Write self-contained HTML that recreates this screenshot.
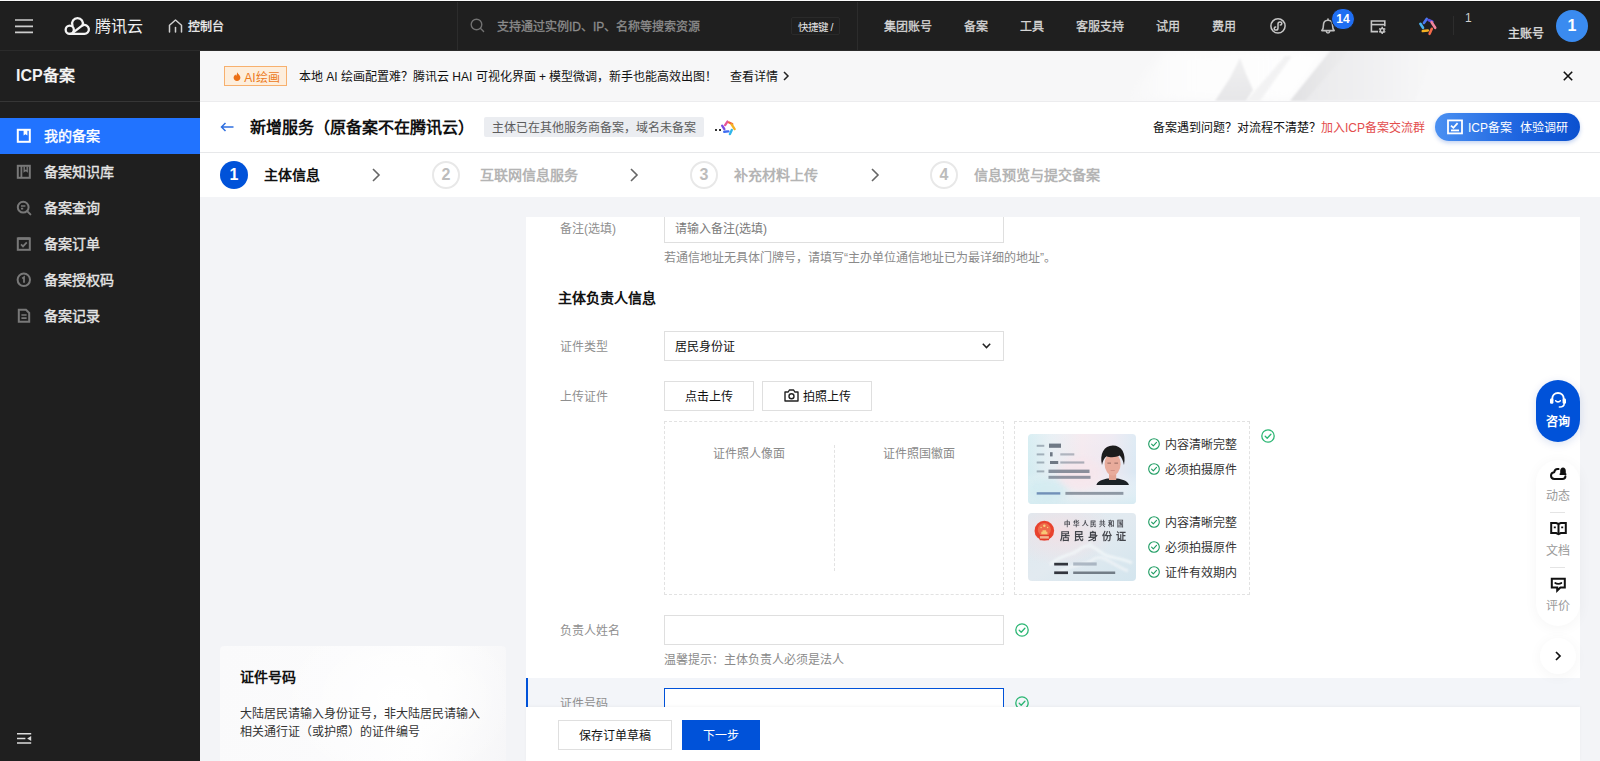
<!DOCTYPE html>
<html lang="zh-CN">
<head>
<meta charset="utf-8">
<title>ICP备案</title>
<style>
*{box-sizing:border-box;margin:0;padding:0}
html,body{width:1600px;height:761px;overflow:hidden;background:#f3f4f7}
body{font-family:"Liberation Sans",sans-serif;font-size:12px;color:#000;position:relative}
.abs{position:absolute}
.t{position:absolute;white-space:nowrap;line-height:1}
/* top bar */
#topbar{left:0;top:0;width:1600px;height:50px;background:#1f1f1f}
#sidebar{left:0;top:50px;width:200px;height:711px;background:#1f1f1f}
#banner{left:200px;top:50px;width:1400px;height:51px;background:#f7f7f8;overflow:hidden;box-shadow:inset 0 -1px 0 #ededef}
#header{left:200px;top:101px;width:1400px;height:51px;background:#fff}
#steps{left:200px;top:152px;width:1400px;height:45px;background:#fff;border-top:1px solid #e7e8ea}
#card{left:526px;top:217px;width:1054px;height:490px;background:#fff;overflow:hidden}
#footer{left:526px;top:707px;width:1054px;height:54px;background:#fff;box-shadow:0 -1px 3px rgba(0,0,0,.04)}
#help{left:220px;top:646px;width:286px;height:115px;border-radius:4px 4px 0 0;overflow:hidden;background:radial-gradient(ellipse 120px 90px at 62% 45%,#ffffff 0%,rgba(255,255,255,0) 100%),linear-gradient(100deg,#fafafb 0%,#fbfbfc 45%,#fdfdfd 70%,#f6f6f8 100%)}

/* generic text helpers */
.c{position:absolute;display:flex;align-items:center;white-space:nowrap}
.f12{font-size:12px}.f14{font-size:14px}.f16{font-size:16px}
.b{font-weight:bold}
svg{position:absolute;overflow:visible}
/* topbar */
#topbar .nav{color:#d6d6d6;font-size:12px;height:50px;top:0;-webkit-text-stroke:.3px currentColor}
#topbar .vline{position:absolute;top:0;width:1px;height:50px;background:#2c2c2c}
/* sidebar */
#sidebar .item{position:absolute;left:0;width:200px;height:36px;color:#e4e4e4;font-size:14px;-webkit-text-stroke:.4px currentColor}
#sidebar .item span{position:absolute;left:44px;top:0;line-height:36px;white-space:nowrap}
#sidebar .item.on{background:#2173ff;color:#fff}
#sidebar .item svg{left:16px;top:10px}

/* steps */
.stepc{position:absolute;top:7.5px;width:28px;height:28px;border-radius:14px;display:flex;align-items:center;justify-content:center;font-size:16px;font-weight:bold}
.stepc.off{border:2px solid #e8e8e8;color:#bcbcbc;background:#fff}
.stept{position:absolute;top:-1px;height:44px;display:flex;align-items:center;font-size:14px;font-weight:bold;white-space:nowrap}
.stept.off{color:#b4b4b4}

/* form */
#card .lab{position:absolute;left:34px;padding-bottom:2px;color:#8f8f8f;font-size:12px;height:30px;display:flex;align-items:center;white-space:nowrap}
#card .inp{position:absolute;left:138px;width:340px;height:30px;padding-bottom:2px;border:1px solid #dfdfdf;background:#fff;font-size:12px;display:flex;align-items:center;padding-left:10px;white-space:nowrap}
#card .hint{position:absolute;left:138px;margin-top:-1px;color:#8a8a8a;font-size:12px;height:18px;display:flex;align-items:center;white-space:nowrap}
.btn{position:absolute;height:30px;padding-bottom:2px;border:1px solid #dfdfdf;background:#fff;color:#111;font-size:12px;display:flex;align-items:center;justify-content:center;white-space:nowrap}
.ok{position:absolute}
.req{position:absolute;left:151px;margin-top:-1px;font-size:12px;color:#333;height:14px;display:flex;align-items:center;white-space:nowrap}
</style>
</head>
<body>
<div id="topbar" class="abs">
  <!-- hamburger -->
  <svg style="left:15px;top:18px" width="18" height="16" viewBox="0 0 18 16" stroke="#cdcdcd" stroke-width="1.7"><path d="M0 2 H18 M0 8.3 H18 M0 14.4 H18"/></svg>
  <!-- cloud logo -->
  <svg style="left:64px;top:16px" width="26" height="20" viewBox="0 0 26 20" fill="none" stroke="#f4f4f4" stroke-width="2.3" stroke-linecap="round" stroke-linejoin="round">
    <circle cx="5.75" cy="13.75" r="4.1"/>
    <path d="M8.45 9.4 A5.4 5.4 0 1 1 18.55 9.4 A4.45 4.45 0 1 1 19.9 17.85 H5.75"/>
    <path d="M18.4 9.3 L9 16.6"/>
  </svg>
  <div class="c" style="left:95px;top:-1px;height:52px;font-size:16px;color:#f0f0f0">腾讯云</div>
  <!-- home -->
  <svg style="left:168px;top:19px" width="15" height="14" viewBox="0 0 15 14" fill="none" stroke="#d0d0d0" stroke-width="1.5" stroke-linejoin="round" stroke-linecap="round">
    <path d="M1.5 13 V6.2 L7.5 1 L13.5 6.2 V13"/><path d="M7.5 13 V8.5"/>
  </svg>
  <div class="c nav" style="left:188px;color:#f2f2f2">控制台</div>
  <div class="vline" style="left:457px"></div>
  <!-- search -->
  <svg style="left:470px;top:18px" width="15" height="15" viewBox="0 0 15 15" fill="none" stroke="#727272" stroke-width="1.4" stroke-linecap="round">
    <circle cx="6.5" cy="6.5" r="5.3"/><path d="M10.6 10.6 L13.6 13.6"/>
  </svg>
  <div class="c nav" style="left:497px;color:#8c8c8c">支持通过实例ID、IP、名称等搜索资源</div>
  <div class="c" style="left:791px;top:17px;width:49px;height:18px;border:1px solid #2a2a2a;border-radius:2px;color:#e6e6e6;font-size:10.5px;justify-content:center">快捷键 /</div>
  <div class="vline" style="left:857px"></div>
  <div class="c nav" style="left:884px">集团账号</div>
  <div class="c nav" style="left:964px">备案</div>
  <div class="c nav" style="left:1020px">工具</div>
  <div class="c nav" style="left:1076px">客服支持</div>
  <div class="c nav" style="left:1156px">试用</div>
  <div class="c nav" style="left:1212px">费用</div>
  <!-- mini program -->
  <svg style="left:1270px;top:18px" width="16" height="16" viewBox="0 0 16 16" fill="none" stroke="#c6c6c6" stroke-width="1.5" stroke-linecap="round">
    <circle cx="8" cy="7.9" r="7.1"/>
    <path d="M8 10 V6 C8 4.6 9 3.9 10 3.9 C11.1 3.9 11.8 4.7 11.8 5.6 C11.8 6.5 11.1 7.1 10.3 7.1 M8 10 C8 11.4 7 12.1 6 12.1 C4.9 12.1 4.2 11.3 4.2 10.4 C4.2 9.5 4.9 8.9 5.7 8.9"/>
  </svg>
  <!-- bell -->
  <svg style="left:1320px;top:18px" width="16" height="17" viewBox="0 0 16 17" fill="none" stroke="#bdbdbd" stroke-width="1.6" stroke-linecap="round" stroke-linejoin="round">
    <path d="M1.8 12.6 C3.2 11.4 3.4 9.8 3.4 7.4 C3.4 4.2 5.4 2.2 8 2.2 C10.6 2.2 12.6 4.2 12.6 7.4 C12.6 9.8 12.8 11.4 14.2 12.6 Z"/><path d="M6.2 13 C6.4 15.6 9.6 15.6 9.8 13" stroke-width="1.5"/><path d="M8 1 V2"/>
  </svg>
  <div class="c b" style="left:1331px;top:8px;width:24px;height:22px;border-radius:11px;border:1px solid #1f1f1f;background:#1f6ef2;color:#fff;font-size:12px;justify-content:center">14</div>
  <!-- bill/settings -->
  <svg style="left:1370px;top:20px" width="17" height="15" viewBox="0 0 17 15" fill="none" stroke="#c6c6c6" stroke-width="1.6">
    <path d="M8 11.6 H1.4 V1 H14.8 V6.2"/><path d="M1.4 4.6 H14.8"/>
    <circle cx="12.2" cy="10.4" r="1.9" stroke-width="1.5"/><path d="M12.2 6.8 V8 M12.2 12.8 V14 M9.1 8.6 L10.1 9.2 M14.3 11.6 L15.3 12.2 M9.1 12.2 L10.1 11.6 M14.3 9.2 L15.3 8.6" stroke-width="1.5"/>
  </svg>
  <!-- colourful star -->
  <svg style="left:1419px;top:17px" width="19" height="19" viewBox="0 0 19 19" fill="none" stroke-width="2.6" stroke-linecap="round">
    <path d="M4.9 6 L7.7 1.9" stroke="#4a78f0"/>
    <path d="M9.6 3 L13.4 4.7" stroke="#5b4fe0"/>
    <path d="M12.6 5.2 L16.2 10.8" stroke="#f2849c"/>
    <path d="M12.8 11.8 L10.6 16.8" stroke="#f26a4a"/>
    <path d="M3.8 14 L8.8 13.5" stroke="#f5b223"/>
    <path d="M1.4 6.8 L4 10.8" stroke="#4ab4f0"/>
  </svg>
  <div class="abs" style="left:1453px;top:16px;width:1px;height:19px;background:#2d2d2d"></div>
  <div class="c" style="left:1465px;top:11px;height:14px;font-size:12px;color:#d0d0d0">1</div>
  <div class="c" style="left:1508px;top:24.5px;height:16px;font-size:12px;color:#e0e0e0;-webkit-text-stroke:.3px currentColor">主账号</div>
  <div class="c b" style="left:1556px;top:10px;width:32px;height:32px;border-radius:16px;background:#3a8bf0;color:#fff;font-size:16px;justify-content:center">1</div>
</div>
<div id="sidebar" class="abs">
  <div class="c b" style="left:16px;top:12px;height:24px;font-size:16px;color:#f2f2f2">ICP备案</div>
  <div class="abs" style="left:0;top:51px;width:200px;height:1px;background:#363636"></div>
  <div class="item on" style="top:68px">
    <svg width="16" height="16" viewBox="0 0 16 16" fill="none" stroke="#fff" stroke-width="2"><rect x="1.8" y="1.8" width="12" height="12"/><path d="M7.6 1.8 V7.6 L9.5 6.2 L11.4 7.6 V1.8 Z" fill="#fff" stroke="none"/></svg>
    <span>我的备案</span></div>
  <div class="item" style="top:104px">
    <svg width="16" height="16" viewBox="0 0 16 16" fill="none" stroke="#787878" stroke-width="2"><rect x="1.8" y="1.8" width="12" height="12"/><path d="M5.4 1.8 V13.8" stroke-width="1.8"/><path d="M8.2 2.6 V7.4 L9.7 6.3 L11.2 7.4 V2.6" stroke-width="1.4"/></svg>
    <span>备案知识库</span></div>
  <div class="item" style="top:140px">
    <svg width="16" height="16" viewBox="0 0 16 16" fill="none" stroke="#787878" stroke-width="2" stroke-linecap="round"><circle cx="7.2" cy="7.2" r="5.4"/><path d="M11.4 11.4 L14.4 14.4"/><path d="M5 6 H9.4 M5 8.6 H7.2" stroke-width="1.6" stroke-linecap="butt"/></svg>
    <span>备案查询</span></div>
  <div class="item" style="top:176px">
    <svg width="16" height="16" viewBox="0 0 16 16" fill="none" stroke="#787878" stroke-width="2"><rect x="1.8" y="2.4" width="12" height="11.4"/><path d="M1.8 2.6 H13.8" stroke-width="2.6"/><path d="M5 8.4 L7 10.4 L10.8 6.4" stroke-width="1.8"/></svg>
    <span>备案订单</span></div>
  <div class="item" style="top:212px">
    <svg width="16" height="16" viewBox="0 0 16 16" fill="none" stroke="#787878" stroke-width="2"><circle cx="7.8" cy="7.8" r="6.2"/><path d="M6.2 6.4 L8 5.2 V10.8" stroke-width="1.8"/></svg>
    <span>备案授权码</span></div>
  <div class="item" style="top:248px">
    <svg width="16" height="16" viewBox="0 0 16 16" fill="none" stroke="#787878" stroke-width="2"><path d="M2.8 1.8 H10 L13.2 5 V13.8 H2.8 Z"/><path d="M5.4 7 H10.6 M5.4 10.2 H10.6" stroke-width="1.7"/></svg>
    <span>备案记录</span></div>
  <!-- collapse -->
  <svg style="left:17px;top:683px" width="15" height="11" viewBox="0 0 15 11" fill="none" stroke="#dcdcdc" stroke-width="1.5"><path d="M0 .8 H14.2 M0 5.5 H8.4 M0 10.1 H14.2"/><path d="M14.2 2.9 V8.1 L10.2 5.5 Z" fill="#dcdcdc" stroke="none"/></svg>
</div>
<div id="banner" class="abs">
  <!-- decorative ribbons -->
  <svg style="left:0;top:0" width="1400" height="51" viewBox="0 0 1400 51">
    <defs>
      <linearGradient id="bw" x1="0" y1="0" x2="1" y2="0"><stop offset="0" stop-color="#fdfdfd" stop-opacity="0"/><stop offset=".25" stop-color="#fdfdfd" stop-opacity=".9"/><stop offset=".85" stop-color="#fefefe" stop-opacity="1"/><stop offset="1" stop-color="#fefefe" stop-opacity=".9"/></linearGradient>
      <linearGradient id="bband" x1="0" y1="0" x2="1" y2="0"><stop offset="0" stop-color="#e1e1e3"/><stop offset="1" stop-color="#ededee"/></linearGradient>
      <linearGradient id="bfade" x1="0" y1="0" x2="1" y2="0"><stop offset="0" stop-color="#eaeaec"/><stop offset="1" stop-color="#f7f7f8"/></linearGradient>
      <linearGradient id="btri" x1="0" y1="0" x2="0" y2="1"><stop offset="0" stop-color="#f0f0f1"/><stop offset="1" stop-color="#e6e6e8"/></linearGradient>
      <filter id="bbl" x="-10%" y="-30%" width="120%" height="160%"><feGaussianBlur stdDeviation="1.2"/></filter>
      <filter id="bbl3" x="-10%" y="-30%" width="120%" height="160%"><feGaussianBlur stdDeviation="4"/></filter>
    </defs>
    <rect width="1400" height="51" fill="#f7f7f8"/>
    <path d="M925 51 L965 0 L1131 0 L1092 51 Z" fill="url(#bw)" filter="url(#bbl3)"/>
    <path d="M1105 51 L1148 0 L1235 0 L1215 51 Z" fill="url(#bfade)" filter="url(#bbl)"/>
    <path d="M1090 51 L1131 0 L1150 0 L1106 51 Z" fill="url(#bband)" filter="url(#bbl)"/>
    <path d="M1015 51 L1030 28 L1040 8 L1046 24 L1053 40 L1046 51 Z" fill="url(#btri)" filter="url(#bbl)"/>
    <path d="M1046 51 L1085 6 L1092 6 L1060 51 Z" fill="#f0f0f1" filter="url(#bbl)" opacity=".8"/>
  </svg>
  <div class="c" style="left:24px;top:16px;width:63px;height:20px;border:1px solid #f7b06e;background:#fdeedd;color:#ec7a1c;font-size:12px;justify-content:center;padding-left:2px">
    <svg style="position:static;margin-right:3px" width="8" height="9" viewBox="0 0 8 9"><path d="M4 0 C4.6 1.8 7.4 3 7.4 5.6 C7.4 7.6 5.8 9 4 9 C2.2 9 .6 7.6 .6 5.6 C.6 4.2 1.6 3.6 2.2 2.4 C2.8 3 3 3.4 3.2 3.8 C3.8 2.6 4.2 1.6 4 0 Z" fill="#ec6f14"/></svg>AI绘画</div>
  <div class="c f12" style="left:99px;top:0;height:51px;color:#111">本地 AI 绘画配置难？腾讯云 HAI 可视化界面 + 模型微调，新手也能高效出图！</div>
  <div class="c f12" style="left:530px;top:0;height:51px;color:#111">查看详情</div>
  <svg style="left:783px;top:21px;left:583px" width="6" height="10" viewBox="0 0 6 10" fill="none" stroke="#222" stroke-width="1.5"><path d="M1 1 L5 5 L1 9"/></svg>
  <svg style="left:1363px;top:21px" width="10" height="10" viewBox="0 0 10 10" fill="none" stroke="#111" stroke-width="1.6"><path d="M.8 .8 L9.2 9.2 M9.2 .8 L.8 9.2"/></svg>
</div>
<div id="header" class="abs">
  <svg style="left:20px;top:21px" width="14" height="10" viewBox="0 0 14 10" fill="none" stroke="#2f6fe0" stroke-width="1.5"><path d="M13.5 5 H1.5 M5.5 1 L1.5 5 L5.5 9"/></svg>
  <div class="c b f16" style="left:50px;top:-1px;height:51px;color:#111">新增服务（原备案不在腾讯云）</div>
  <div class="c f12" style="left:284px;top:16px;width:220px;height:20px;background:#ebedf1;border-radius:2px;color:#5c5c5c;padding-left:8px;padding-bottom:2px">主体已在其他服务商备案，域名未备案</div>
  <!-- dots + coloured star -->
  <div class="abs" style="left:515px;top:28px;width:2px;height:2px;background:#333"></div>
  <div class="abs" style="left:519px;top:28px;width:2px;height:2px;background:#333"></div>
  <svg style="left:521px;top:19px" width="16" height="16" viewBox="0 0 19 19" fill="none" stroke-width="2.8" stroke-linecap="round">
    <path d="M4.9 6 L7.7 1.9" stroke="#e8559a"/>
    <path d="M9.6 3 L13.4 4.7" stroke="#f2683c"/>
    <path d="M12.6 5.2 L16.2 10.8" stroke="#f5b223"/>
    <path d="M12.8 11.8 L10.6 16.8" stroke="#2fb6ea"/>
    <path d="M3.8 14 L8.8 13.5" stroke="#3f6df2"/>
    <path d="M1.4 6.8 L4 10.8" stroke="#7a4be0"/>
  </svg>
  <div class="c f12" style="left:953px;top:0;height:51px;color:#111">备案遇到问题？对流程不清楚？</div>
  <div class="c f12" style="left:1121px;top:0;height:51px;color:#e34d4d">加入ICP备案交流群</div>
  <div class="abs" style="left:1235px;top:12px;width:145px;height:28px;border-radius:14px;background:linear-gradient(90deg,#4a90f2 0%,#1f66e0 55%,#0b50cf 100%);box-shadow:0 2px 4px rgba(20,80,200,.25)"></div>
  <svg style="left:1247px;top:18px" width="16" height="16" viewBox="0 0 16 16" fill="none" stroke="#fff" stroke-width="1.8"><rect x="1" y="1.4" width="14" height="13"/><path d="M4 6.6 L6.4 8.8 L10.6 4.2" stroke-width="1.8"/><path d="M4 11.4 H12"/></svg>
  <div class="c f12" style="left:1268px;top:11px;height:28px;color:#fff">ICP备案</div>
  <div class="c f12" style="left:1320px;top:11px;height:28px;color:#fff">体验调研</div>
</div>
<div id="steps" class="abs">
  <div class="stepc" style="left:20px;background:#0052d9;color:#fff">1</div>
  <div class="stept" style="left:64px;color:#111">主体信息</div>
  <svg style="left:172px;top:14.5px" width="8" height="14" viewBox="0 0 8 14" fill="none" stroke="#666" stroke-width="1.6"><path d="M1 1 L7 7 L1 13"/></svg>
  <div class="stepc off" style="left:232px">2</div>
  <div class="stept off" style="left:280px">互联网信息服务</div>
  <svg style="left:430px;top:14.5px" width="8" height="14" viewBox="0 0 8 14" fill="none" stroke="#666" stroke-width="1.6"><path d="M1 1 L7 7 L1 13"/></svg>
  <div class="stepc off" style="left:490px">3</div>
  <div class="stept off" style="left:534px">补充材料上传</div>
  <svg style="left:671px;top:14.5px" width="8" height="14" viewBox="0 0 8 14" fill="none" stroke="#666" stroke-width="1.6"><path d="M1 1 L7 7 L1 13"/></svg>
  <div class="stepc off" style="left:730px">4</div>
  <div class="stept off" style="left:774px">信息预览与提交备案</div>
</div>
<div id="card" class="abs">
  <div class="lab" style="top:-4px">备注(选填)</div>
  <div class="inp" style="top:-4px;color:#7a7a7a">请输入备注(选填)</div>
  <div class="hint" style="top:31px">若通信地址无具体门牌号，请填写“主办单位通信地址已为最详细的地址”。</div>
  <div class="c b f14" style="left:32px;top:68.5px;height:22px;color:#111">主体负责人信息</div>
  <div class="lab" style="top:114px">证件类型</div>
  <div class="inp" style="top:114px;color:#111">居民身份证</div>
  <svg style="left:456px;top:126px" width="9" height="6" viewBox="0 0 9 6" fill="none" stroke="#222" stroke-width="1.5"><path d="M.8 .8 L4.5 4.6 L8.2 .8"/></svg>
  <div class="lab" style="top:164px">上传证件</div>
  <div class="btn" style="left:138px;top:164px;width:90px">点击上传</div>
  <div class="btn" style="left:236px;top:164px;width:110px">
    <svg style="position:static;margin-right:4px;margin-top:1.5px" width="15" height="13" viewBox="0 0 15 13" fill="none" stroke="#222" stroke-width="1.4" stroke-linejoin="round"><path d="M1 3 H4.2 L5.4 1 H9.6 L10.8 3 H14 V12 H1 Z"/><circle cx="7.5" cy="7.3" r="2.5"/></svg>拍照上传</div>
  <!-- upload box 1 -->
  <div class="abs" style="left:138px;top:204px;width:340px;height:174px;border:1px dashed #e2e2e2"></div>
  <div class="abs" style="left:308px;top:228px;width:0;height:126px;border-left:1px dashed #e2e2e2"></div>
  <div class="c f12" style="left:138px;top:226px;width:170px;height:18px;justify-content:center;color:#8a8a8a">证件照人像面</div>
  <div class="c f12" style="left:308px;top:226px;width:170px;height:18px;justify-content:center;color:#8a8a8a">证件照国徽面</div>
  <!-- sample box -->
  <div class="abs" style="left:488px;top:204px;width:236px;height:174px;border:1px dashed #e2e2e2"></div>
  <svg id="id1" style="left:502px;top:217px" width="108" height="70" viewBox="0 0 108 70">
    <defs>
      <linearGradient id="i1a" x1="0" y1="0" x2="1" y2="0"><stop offset="0" stop-color="#d3ecf1"/><stop offset=".22" stop-color="#e6eef3"/><stop offset=".5" stop-color="#f4e8ee"/><stop offset=".78" stop-color="#ece8f1"/><stop offset="1" stop-color="#dae8f3"/></linearGradient>
      <linearGradient id="i1b" x1="0" y1="0" x2="0" y2="1"><stop offset="0" stop-color="#ffffff" stop-opacity=".15"/><stop offset=".55" stop-color="#ffffff" stop-opacity="0"/><stop offset="1" stop-color="#d6ecf2" stop-opacity=".8"/></linearGradient>
      <filter id="bl" x="-10%" y="-10%" width="120%" height="120%"><feGaussianBlur stdDeviation=".45"/></filter>
      <filter id="bl2" x="-20%" y="-20%" width="140%" height="140%"><feGaussianBlur stdDeviation=".8"/></filter>
      <filter id="bl4" x="-30%" y="-30%" width="160%" height="160%"><feGaussianBlur stdDeviation="3"/></filter>
      <clipPath id="cp1"><rect width="108" height="70" rx="4"/></clipPath>
    </defs>
    <g clip-path="url(#cp1)">
      <rect width="108" height="70" fill="url(#i1a)"/>
      <rect width="108" height="70" fill="url(#i1b)"/>
      <ellipse cx="20" cy="56" rx="20" ry="12" fill="#cfeaf0" opacity=".7" filter="url(#bl4)"/>
      <ellipse cx="52" cy="40" rx="22" ry="16" fill="#f7e6ec" opacity=".8" filter="url(#bl4)"/>
      <g filter="url(#bl)" fill="#6f7b8b">
        <rect x="8.7" y="10.8" width="7.6" height="2" opacity=".55"/><rect x="21" y="9.6" width="12" height="4.2" fill="#5a6472" opacity=".85"/>
        <rect x="8.7" y="19.4" width="7.6" height="2" opacity=".55"/><rect x="22" y="18.2" width="2.6" height="4.2" fill="#5a6472" opacity=".85"/><rect x="32.3" y="19.3" width="14" height="2.2" opacity=".5"/>
        <rect x="8.7" y="27.5" width="7.6" height="2" opacity=".55"/><rect x="22" y="27" width="8.2" height="3" fill="#5a6472" opacity=".85"/><rect x="32.3" y="27.4" width="24" height="2.2" opacity=".55"/>
        <rect x="8.7" y="36.4" width="7.6" height="2" opacity=".55"/><rect x="20.5" y="35.6" width="41" height="3.4" fill="#667080" opacity=".75"/>
        <rect x="20.5" y="41.8" width="42" height="3" fill="#667080" opacity=".7"/>
        <rect x="8.7" y="58.2" width="23.6" height="2.4" fill="#4f72a4" opacity=".75"/><rect x="37.4" y="57.9" width="58" height="2.9" fill="#6a7482" opacity=".7"/>
      </g>
      <!-- portrait -->
      <g filter="url(#bl)">
        <path d="M68.4 51 C70 46.4 76 45.6 79.6 44.6 L89.6 44.6 C93.2 45.6 99.4 46.4 101 51 Z" fill="#1f2025"/>
        <rect x="81" y="38" width="7.2" height="8" fill="#e3a392"/>
        <ellipse cx="84.6" cy="30" rx="8" ry="11.4" fill="#e8ab9b"/>
        <path d="M74 31 C71.4 20 76 11.4 84.8 11.4 C93.6 11.4 98.4 19 96 31 C95 26.6 93.6 23.4 91.6 21.6 C87.6 23.6 81.6 23.6 78.6 22.2 C76.2 24 74.8 27 74 31 Z" fill="#1b1a1d"/>
        <rect x="79.4" y="28.6" width="3.6" height="1.1" fill="#6a4640" opacity=".6"/><rect x="86.4" y="28.6" width="3.6" height="1.1" fill="#6a4640" opacity=".6"/>
        <rect x="82.6" y="36" width="4.2" height=".9" fill="#c27a6e" opacity=".6"/>
      </g>
    </g>
  </svg>
  <svg id="id2" style="left:502px;top:296px" width="108" height="68" viewBox="0 0 108 68">
    <defs>
      <linearGradient id="i2a" x1="0" y1="0" x2="1" y2="1"><stop offset="0" stop-color="#dde9ef"/><stop offset=".5" stop-color="#e2eaf0"/><stop offset="1" stop-color="#d3e5ee"/></linearGradient>
      <radialGradient id="i2b" cx=".3" cy=".28" r=".5"><stop offset="0" stop-color="#f3e0e5" stop-opacity=".95"/><stop offset="1" stop-color="#f3e0e5" stop-opacity="0"/></radialGradient>
      <clipPath id="cp2"><rect width="108" height="68" rx="4"/></clipPath>
    </defs>
    <g clip-path="url(#cp2)">
      <rect width="108" height="68" fill="url(#i2a)"/>
      <rect width="108" height="68" fill="url(#i2b)"/>
      <!-- faint great wall -->
      <g filter="url(#bl2)" fill="none" stroke="#f1f6f8" stroke-width="3" opacity=".9">
        <path d="M22 52 C34 40 42 44 52 36 C60 30 66 34 74 40 C82 46 92 44 104 50"/>
        <path d="M30 60 C44 50 56 54 66 46 C74 40 84 52 100 58" stroke="#eef3f6"/>
        <path d="M58 34 l4 -6 l4 6 z" fill="#eef3f6" stroke="none"/>
      </g>
      <!-- emblem -->
      <g filter="url(#bl)" transform="translate(-1,0.9) scale(1.02)">
        <circle cx="17" cy="16.4" r="9.6" fill="#e8432e"/>
        <circle cx="17" cy="15.4" r="6.4" fill="#ef6a4c"/>
        <path d="M11.2 21 H22.8 L21.4 25.8 H12.6 Z" fill="#e23a28"/>
        <rect x="12.6" y="21.8" width="8.8" height="2.4" fill="#f6c9a0" opacity=".85"/>
        <path d="M14 17.6 H20 V20 H14 Z M15.2 16 H18.8 V17.6 H15.2 Z" fill="#f8d27a" opacity=".9"/>
        <circle cx="17" cy="11.6" r="1.2" fill="#f8d27a"/><circle cx="13.8" cy="13.4" r=".7" fill="#f8d27a"/><circle cx="20.2" cy="13.4" r=".7" fill="#f8d27a"/>
      </g>
      <text x="36" y="13.2" font-family="'Liberation Serif',serif" font-weight="bold" font-size="6.5" letter-spacing="1.8" fill="#45474e" filter="url(#bl)">中华人民共和国</text>
      <text x="32.4" y="26.9" font-family="'Liberation Serif',serif" font-weight="bold" font-size="10" letter-spacing="4" fill="#43454c" filter="url(#bl)">居民身份证</text>
      <g filter="url(#bl)">
        <rect x="26.2" y="49.8" width="13.8" height="2.7" fill="#30343c"/><rect x="45.2" y="49.4" width="23.5" height="3.2" fill="#9aa6b4" opacity=".75"/>
        <rect x="26.2" y="58.4" width="13.8" height="2.7" fill="#30343c"/><rect x="45.2" y="58.5" width="42" height="2.5" fill="#59616d" opacity=".8"/>
      </g>
    </g>
  </svg>
  <svg style="left:622px;top:220.9px" width="12" height="12" viewBox="0 0 14 14" fill="none" stroke="#1f9d63" stroke-width="1.3" stroke-linecap="round" stroke-linejoin="round"><circle cx="7" cy="7" r="6.2"/><path d="M4.2 7.2 L6.2 9.2 L9.9 5.2"/></svg><div class="req" style="left:639px;top:220px">内容清晰完整</div>
  <svg style="left:622px;top:245.9px" width="12" height="12" viewBox="0 0 14 14" fill="none" stroke="#1f9d63" stroke-width="1.3" stroke-linecap="round" stroke-linejoin="round"><circle cx="7" cy="7" r="6.2"/><path d="M4.2 7.2 L6.2 9.2 L9.9 5.2"/></svg><div class="req" style="left:639px;top:245px">必须拍摄原件</div>
  <svg style="left:622px;top:298.8px" width="12" height="12" viewBox="0 0 14 14" fill="none" stroke="#1f9d63" stroke-width="1.3" stroke-linecap="round" stroke-linejoin="round"><circle cx="7" cy="7" r="6.2"/><path d="M4.2 7.2 L6.2 9.2 L9.9 5.2"/></svg><div class="req" style="left:639px;top:298px">内容清晰完整</div>
  <svg style="left:622px;top:323.8px" width="12" height="12" viewBox="0 0 14 14" fill="none" stroke="#1f9d63" stroke-width="1.3" stroke-linecap="round" stroke-linejoin="round"><circle cx="7" cy="7" r="6.2"/><path d="M4.2 7.2 L6.2 9.2 L9.9 5.2"/></svg><div class="req" style="left:639px;top:323px">必须拍摄原件</div>
  <svg style="left:622px;top:348.8px" width="12" height="12" viewBox="0 0 14 14" fill="none" stroke="#1f9d63" stroke-width="1.3" stroke-linecap="round" stroke-linejoin="round"><circle cx="7" cy="7" r="6.2"/><path d="M4.2 7.2 L6.2 9.2 L9.9 5.2"/></svg><div class="req" style="left:639px;top:348px">证件有效期内</div>
  <svg style="left:735px;top:212px" width="14" height="14" viewBox="0 0 14 14" fill="none" stroke="#2bb673" stroke-width="1.3" stroke-linecap="round" stroke-linejoin="round"><circle cx="7" cy="7" r="6.2"/><path d="M4.2 7.2 L6.2 9.2 L9.9 5.2"/></svg>
  <!-- name -->
  <div class="lab" style="top:398px">负责人姓名</div>
  <div class="inp" style="top:398px"></div>
  <svg style="left:489px;top:406px" width="14" height="14" viewBox="0 0 14 14" fill="none" stroke="#2bb673" stroke-width="1.3" stroke-linecap="round" stroke-linejoin="round"><circle cx="7" cy="7" r="6.2"/><path d="M4.2 7.2 L6.2 9.2 L9.9 5.2"/></svg>
  <div class="hint" style="top:433px">温馨提示：主体负责人必须是法人</div>
  <!-- focused row -->
  <div class="abs" style="left:0;top:461px;width:1054px;height:29px;background:#f3f5f9;border-left:2px solid #0052d9"></div>
  <div class="lab" style="top:471px">证件号码</div>
  <div class="inp" style="top:471px;border-color:#0052d9"></div>
  <svg style="left:489px;top:479px" width="14" height="14" viewBox="0 0 14 14" fill="none" stroke="#2bb673" stroke-width="1.3" stroke-linecap="round" stroke-linejoin="round"><circle cx="7" cy="7" r="6.2"/><path d="M4.2 7.2 L6.2 9.2 L9.9 5.2"/></svg>
</div>
<div id="footer" class="abs">
  <div class="btn" style="left:32px;top:13px;width:114px">保存订单草稿</div>
  <div class="btn" style="left:156px;top:13px;width:78px;background:#0052d9;border-color:#0052d9;color:#fff">下一步</div>
</div>
<div class="abs" style="left:0;top:50px;width:1600px;height:1px;background:#2b2b2b"></div>
<div class="abs" style="left:0;top:0;width:1600px;height:1px;background:#fbfbfb"></div>
<div class="abs" style="left:0;top:1px;width:1600px;height:1px;background:#161616"></div>
<div class="abs" style="left:200px;top:101px;width:1400px;height:1px;background:#ececee"></div>
<div id="help" class="abs">
  <div class="c b f14" style="left:20px;top:18.5px;height:22px;color:#111">证件号码</div>
  <div class="c f12" style="left:20px;top:57px;height:18px;color:#333">大陆居民请输入身份证号，非大陆居民请输入</div>
  <div class="c f12" style="left:20px;top:75px;height:18px;color:#333">相关通行证（或护照）的证件编号</div>
</div>
<div id="float">
  <div class="abs" style="left:1536px;top:380px;width:44px;height:62px;border-radius:22px;background:#0052d9;box-shadow:0 2px 8px rgba(0,60,170,.15)"></div>
  <svg style="left:1549px;top:391px" width="18" height="18" viewBox="0 0 18 18" fill="none" stroke="#fff" stroke-linecap="round">
    <path d="M3.2 9.6 V8 C3.2 4.6 5.7 2 9 2 C12.3 2 14.8 4.6 14.8 8 V9.6" stroke-width="2"/>
    <rect x="1" y="7.6" width="3.4" height="5.2" rx="1.2" fill="#fff" stroke="none"/>
    <rect x="13.6" y="7.6" width="3.4" height="5.2" rx="1.2" fill="#fff" stroke="none"/>
    <path d="M6.8 9.8 C7.6 11.2 10.4 11.2 11.2 9.8" stroke-width="1.6"/>
    <path d="M15.2 12.4 C15.2 14.6 13.4 16 10.4 16" stroke-width="1.6"/>
  </svg>
  <div class="c f12 b" style="left:1536px;top:412px;width:44px;height:16px;justify-content:center;color:#fff">咨询</div>
  <div class="abs" style="left:1536px;top:460px;width:44px;height:166px;border-radius:22px;background:#fff;box-shadow:0 2px 14px rgba(0,0,0,.045)"></div>
  <svg style="left:1549px;top:466px" width="18" height="15" viewBox="0 0 18 15" fill="none" stroke="#111" stroke-width="2" stroke-linejoin="round" stroke-linecap="round">
    <path d="M9.6 3 C7.4 2.6 5.6 4 5.2 6.2 C3.2 6.4 2 7.8 2 9.6 C2 11.6 3.4 13 5.4 13 H13.4 C15.2 13 16.4 11.8 16.4 10.2"/>
    <path d="M11.2 8.4 V5 C11.2 2.8 12.4 1.4 14 1.4 C15.6 1.4 16.8 2.8 16.8 5 V8.4 Z" fill="#111" stroke="none"/>
    <rect x="10.6" y="7.2" width="6.8" height="1.8" rx=".6" fill="#111" stroke="none"/>
  </svg>
  <div class="c f12" style="left:1536px;top:486px;width:44px;height:16px;justify-content:center;color:#9a9a9a">动态</div>
  <div class="abs" style="left:1550px;top:512px;width:15px;height:1px;background:#e4e4e4"></div>
  <svg style="left:1550px;top:521px" width="17" height="15" viewBox="0 0 17 15" fill="none" stroke="#111" stroke-width="2" stroke-linejoin="miter">
    <path d="M1.2 2 H6.2 L8.5 3 L10.8 2 H15.8 V12 H10.8 L8.5 13.2 L6.2 12 H1.2 Z"/>
    <path d="M8.5 3 V13"/>
    <path d="M3.8 6.4 H5.8 M11.2 6.4 H13.2" stroke-width="1.8"/>
  </svg>
  <div class="c f12" style="left:1536px;top:541px;width:44px;height:16px;justify-content:center;color:#9a9a9a">文档</div>
  <div class="abs" style="left:1550px;top:567px;width:15px;height:1px;background:#e4e4e4"></div>
  <svg style="left:1550px;top:577px" width="16" height="15" viewBox="0 0 16 15" fill="none" stroke="#111" stroke-width="2" stroke-linejoin="miter">
    <path d="M1.8 1.8 H14.8 V10.6 H10.4 L7.2 13.6 V10.6 H1.8 Z"/>
    <path d="M5.2 6 C6.6 7.2 10 7.2 11.4 6" stroke-width="1.7" stroke-linecap="round"/>
  </svg>
  <div class="c f12" style="left:1536px;top:596px;width:44px;height:16px;justify-content:center;color:#9a9a9a">评价</div>
  <div class="abs" style="left:1540px;top:638px;width:36px;height:36px;border-radius:18px;background:#fff;box-shadow:0 2px 14px rgba(0,0,0,.045)"></div>
  <svg style="left:1555px;top:651px" width="6" height="10" viewBox="0 0 6 10" fill="none" stroke="#111" stroke-width="1.7"><path d="M1 1 L5 5 L1 9"/></svg>
</div>
</body>
</html>
